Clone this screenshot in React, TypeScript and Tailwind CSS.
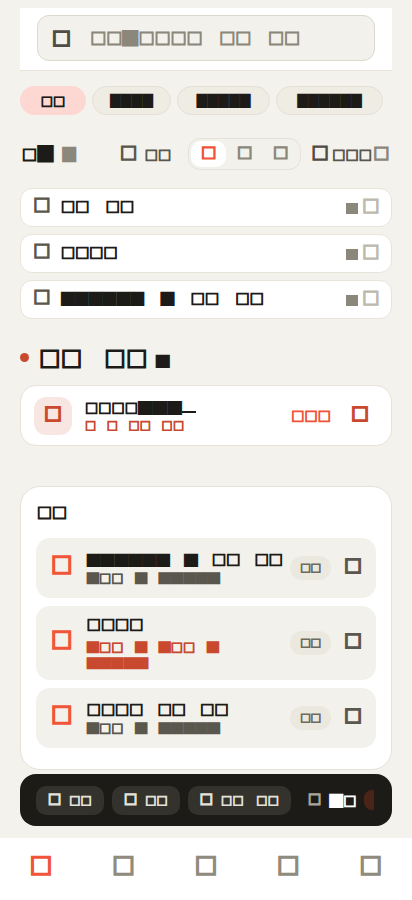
import React from "react"

const tabs = [
  { label: "□□", active: true, w: "w-[66px]" },
  { label: "████", active: false, w: "w-[79px]" },
  { label: "█████", active: false, w: "w-[93px]" },
  { label: "██████", active: false, w: "w-[107px]" },
]

const rows = ["□□ □□", "□□□□", "██████ █ □□ □□"]

const tasks = [
  { title: "██████ █ □□ □□", sub: "█□□ █ █████", warn: false },
  { title: "□□□□", sub: "█□□ █ █□□ █ █████", warn: true },
  { title: "□□□□ □□ □□", sub: "█□□ █ █████", warn: false },
]

const chips = ["□□", "□□", "□□ □□"]

// stroke weights used to thicken the square glyphs
const s1 = "[-webkit-text-stroke:0.9px_currentColor]"
const s2 = "[-webkit-text-stroke:1.3px_currentColor]"
const s3 = "[-webkit-text-stroke:1.7px_currentColor]"

function Icon({ className = "" }: { className?: string }) {
  return <span className={`leading-none ${className}`}>□</span>
}

// solid block run, squashed to the cap height of the line
function Fill({ text, className = "" }: { text: string; className?: string }) {
  return <span className={`inline-block align-middle [-webkit-text-stroke:0] ${className}`}>{text}</span>
}

function Mixed({ text, fill }: { text: string; fill: string }) {
  const parts = text.split(/(█+)/).filter(Boolean)
  return (
    <>
      {parts.map((p, i) => (p[0] === "█" ? <Fill key={i} text={p} className={fill} /> : <React.Fragment key={i}>{p}</React.Fragment>))}
    </>
  )
}

export default function App() {
  return (
    <div className="min-h-screen w-[412px] bg-[#f4f2ed] font-['DejaVu_Sans',sans-serif] text-[#1d1b17] [word-spacing:0.7em]">
      {/* header + search */}
      <div className="pt-2 px-5">
        <div className="bg-white border-b border-[#e8e4db] px-[17px] pt-[7px] pb-[9px]">
          <div className="h-[46px] rounded-xl bg-[#f3f1ec] border border-[#dcd8cd] flex items-center pl-[14px] gap-[19px]">
            <Icon className={`mb-[3px] text-[20px] text-[#4f4d46] ${s3}`} />
            <span className={`text-[17px] text-[#8b887b] ${s1}`}>
              <Mixed text="□□█□□□□ □□ □□" fill="text-[21px] leading-[16px] scale-y-[0.66]" />
            </span>
          </div>
        </div>
      </div>

      <div className="px-5">
        {/* filter pills */}
        <div className="mt-[15px] flex gap-[6px]">
          {tabs.map((t, i) => (
            <div
              key={i}
              className={`h-[29px] rounded-full flex items-center justify-center ${t.w} ${s1} ${
                t.active ? "bg-[#fdd8d2] text-[13px] font-bold" : "bg-[#efece4] border border-[#e4e0d6]"
              }`}
            >
              <Mixed text={t.label} fill="text-[14px] leading-[14px] scale-y-[0.86]" />
            </div>
          ))}
        </div>

        {/* toolbar */}
        <div className="mt-[23px] flex items-center h-[32px] pr-[3px]">
          <span className={`ml-[2px] text-[16px] font-bold ${s1}`}>
            □<Fill text="█" className="text-[21px] leading-[17px] scale-y-[0.7]" />
          </span>
          <Fill text="█" className="ml-[9px] text-[18px] leading-[15px] scale-y-[0.72] text-[#8b887b]" />
          <Icon className={`ml-auto -mt-[4px] text-[18px] text-[#5a574e] ${s2}`} />
          <span className={`ml-[8px] text-[14px] text-[#5a574e] ${s1}`}>□□</span>
          <div className="ml-[17px] h-[32px] rounded-xl bg-[#f3f1ec] border border-[#e6e2d9] flex items-center p-[2px] gap-[1px]">
            <div className="h-full w-[35px] rounded-[10px] bg-white flex items-center justify-center">
              <Icon className={`-mt-[4px] text-[16px] text-[#f0553a] ${s2}`} />
            </div>
            <div className="h-full w-[35px] flex items-center justify-center">
              <Icon className={`-mt-[4px] text-[16px] text-[#8b887b] ${s2}`} />
            </div>
            <div className="h-full w-[35px] flex items-center justify-center">
              <Icon className={`-mt-[4px] text-[16px] text-[#8b887b] ${s2}`} />
            </div>
          </div>
          <Icon className={`ml-[10px] -mt-[4px] text-[18px] text-[#4f4d46] ${s2}`} />
          <span className={`ml-[4px] text-[14px] text-[#5a574e] ${s1}`}>□□□</span>
          <Icon className={`ml-[1px] -mt-[4px] text-[17px] text-[#8b887b] ${s2}`} />
        </div>

        {/* quick rows */}
        <div className="mt-[18px] flex flex-col gap-[7px]">
          {rows.map((r, i) => (
            <div key={i} className="h-[39px] rounded-xl bg-white border border-[#e8e4da] flex items-center pl-[12px] pr-[12px]">
              <Icon className={`text-[18px] text-[#5a574e] -mt-[7px] ${s2}`} />
              <span className={`ml-[11px] text-[15px] font-bold -mt-[2px] ${s1}`}>
                <Mixed text={r} fill="text-[18px] leading-[14px] scale-y-[0.67]" />
              </span>
              <span className="ml-auto mt-[2px] w-[12px] h-[11px] bg-[#8b887b]" />
              <Icon className={`ml-[4px] text-[18px] text-[#bdb9ad] -mt-[5px] ${s2}`} />
            </div>
          ))}
        </div>

        {/* section heading */}
        <div className="mt-[26px] h-[24px] flex items-center gap-[10px]">
          <span className="w-[9px] h-[9px] rounded-full bg-[#c9492f]" />
          <span className={`text-[23px] leading-none font-bold [word-spacing:0.6em] ${s2}`}>□□ □□</span>
          <Fill text="█" className="-ml-[2px] mt-[6px] text-[18px] leading-[13px] scale-y-[0.62]" />
        </div>

        {/* current focus card */}
        <div className="mt-[16px] h-[61px] rounded-2xl bg-white border border-[#e6e2d8] flex items-center pl-[13px] pr-[22px]">
          <div className="w-[38px] h-[38px] rounded-xl bg-[#f8e6e2] flex items-center justify-center">
            <Icon className={`-mt-[6px] text-[19px] text-[#c9492f] ${s3}`} />
          </div>
          <div className="ml-[13px] flex flex-col gap-[4px]">
            <span className={`text-[14px] font-bold leading-[15px] ${s1}`}>
              <Mixed text="□□□□███" fill="text-[19px] leading-[14px] scale-y-[0.63]" />
              <span className="inline-block w-[14px] h-[2px] align-[-1px] bg-[#1d1b17]" />
            </span>
            <span className={`text-[12px] text-[#c9492f] leading-[12px] [word-spacing:0.55em] ${s1}`}>□ □ □□ □□</span>
          </div>
          <span className={`ml-auto text-[14px] text-[#f0553a] ${s1}`}>□□□</span>
          <Icon className={`ml-[20px] -mt-[6px] text-[19px] text-[#c9492f] ${s3}`} />
        </div>

        {/* task list */}
        <div className="mt-[40px] rounded-[20px] bg-white border border-[#e6e2d8] px-[15px] pt-[16px] pb-[21px]">
          <div className={`px-[1px] h-[18px] text-[16px] leading-[18px] font-bold ${s1}`}>□□</div>
          <div className="mt-[17px] flex flex-col gap-[8px]">
            {tasks.map((t, i) => (
              <div
                key={i}
                className={`min-h-[60px] rounded-[14px] bg-[#f3f1ec] flex items-center pl-[15px] pr-[14px] ${t.warn ? "py-[9px]" : "py-[12px]"}`}
              >
                <Icon className={`text-[23px] text-[#f0553a] -mt-[9px] ${s3}`} />
                <div className="ml-[14px] flex-1 flex flex-col gap-[2px]">
                  <span className={`text-[15px] font-bold leading-[18px] [word-spacing:0.6em] ${s1}`}>
                    <Mixed text={t.title} fill="text-[18px] leading-[13px] scale-y-[0.62]" />
                  </span>
                  <span
                    className={`text-[13px] leading-[16px] w-[145px] [word-spacing:0.55em] ${s1} ${t.warn ? "mt-[4px] text-[#c9492f]" : "text-[#5a574e]"}`}
                  >
                    <Mixed text={t.sub} fill="text-[16px] leading-[12px] scale-y-[0.64]" />
                  </span>
                </div>
                <span className={`h-[24px] w-[41px] rounded-full bg-[#ebe8e0] flex items-center justify-center text-[11px] text-[#6d6a60] ${s1}`}>□□</span>
                <Icon className={`ml-[13px] -mt-[7px] text-[19px] text-[#5a574e] ${s3}`} />
              </div>
            ))}
          </div>
        </div>

        {/* quick add bar */}
        <div className="mt-[4px] h-[52px] rounded-2xl bg-[#1d1b17] flex items-center pl-[16px] pr-[16px] gap-[8px] overflow-hidden [word-spacing:0.55em]">
          {chips.map((c, i) => (
            <div key={i} className="h-[29px] px-[12px] rounded-[10px] bg-[#34322d] flex items-center gap-[8px] text-[#e4e1d9] shrink-0">
              <Icon className={`-mt-[5px] text-[14px] ${s2}`} />
              <span className={`text-[12px] ${s1}`}>{c}</span>
            </div>
          ))}
          <Icon className={`ml-[9px] -mt-[5px] text-[14px] text-[#a9a59a] shrink-0 ${s2}`} />
          <span className={`text-[14px] text-white shrink-0 ${s1}`}>
            <Fill text="█" className="text-[18px] leading-[14px] scale-y-[0.67]" />□
          </span>
          <div className="w-[10px] h-[20px] rounded-l-[8px] bg-[#4a2418] shrink-0" />
        </div>
      </div>

      {/* bottom nav */}
      <nav className="mt-[12px] h-[62px] bg-white grid grid-cols-5 items-center justify-items-center">
        <Icon className={`mb-[11px] text-[24px] text-[#f0553a] ${s3}`} />
        <Icon className={`mb-[11px] text-[24px] text-[#8f8b7d] ${s3}`} />
        <Icon className={`mb-[11px] text-[24px] text-[#8f8b7d] ${s3}`} />
        <Icon className={`mb-[11px] text-[24px] text-[#8f8b7d] ${s3}`} />
        <Icon className={`mb-[11px] text-[24px] text-[#8f8b7d] ${s3}`} />
      </nav>
    </div>
  )
}
